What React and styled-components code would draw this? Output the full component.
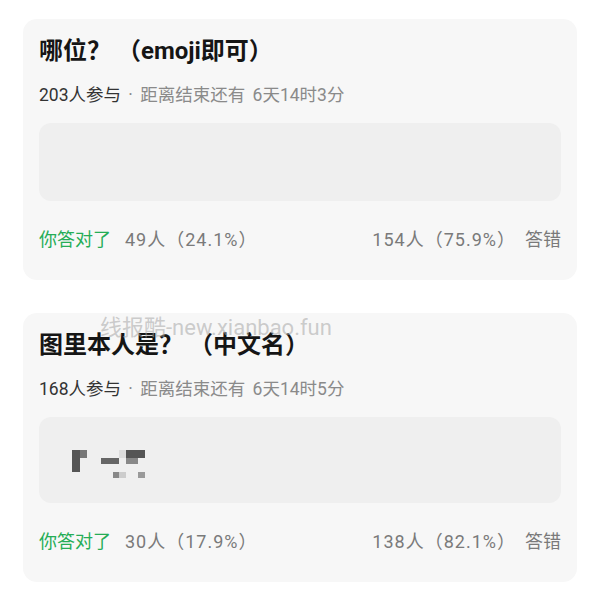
import React from "react";
import styled, { createGlobalStyle } from "styled-components";

const GlobalStyle = createGlobalStyle`
  html, body {
    margin: 0;
    padding: 0;
    background: #ffffff;
  }
  body {
    font-family: Roboto, "Noto Sans CJK SC", sans-serif;
    -webkit-font-smoothing: antialiased;
  }
`;

const Page = styled.div`
  display: flex;
  flex-direction: column;
  gap: 33px;
  padding: 19px 23px;
  width: 554px;
`;

const Card = styled.section`
  position: relative;
  background: #f7f7f7;
  border-radius: 14px;
  padding: 16px 16px 27px;
`;

const Title = styled.h2`
  margin: 0;
  font-size: 24px;
  line-height: 32px;
  font-weight: 700;
  color: #151515;
  white-space: pre;
`;

const Meta = styled.div`
  margin-top: 16px;
  font-size: 17.5px;
  line-height: 24px;
  color: #8a8a8a;
  word-spacing: 3px;
  white-space: pre;
`;

const Count = styled.span`
  color: #333333;
`;

const AnswerBox = styled.div`
  margin-top: 16px;
  height: ${(p) => p.$h}px;
  box-sizing: border-box;
  background: #efefef;
  border-radius: 12px;
  padding: 33px 0 0 33px;
  display: flex;
  align-items: flex-start;
`;

const ResultRow = styled.div`
  margin-top: 26px;
  display: flex;
  justify-content: space-between;
  align-items: center;
  font-size: 18px;
  line-height: 26px;
  color: #7a7a7a;
  white-space: nowrap;
`;

const Side = styled.div`
  display: flex;
  align-items: center;
  gap: ${(p) => p.$gap}px;
`;

const Correct = styled.span`
  color: #25ad56;
`;

const Figure = styled.span`
  letter-spacing: 1px;
`;

const Watermark = styled.div`
  position: absolute;
  left: 77px;
  top: 3px;
  font-size: 22px;
  line-height: 24px;
  color: rgba(165, 165, 165, 0.55);
  pointer-events: none;
  white-space: nowrap;
`;

const PixelBlob = () => (
  <svg width="76" height="28" viewBox="0 0 76 28" aria-hidden="true">
    <rect x="0" y="0" width="8" height="22" fill="#555" />
    <rect x="8" y="0" width="7" height="8" fill="#777" />
    <rect x="29" y="8" width="18" height="6" fill="#666" />
    <rect x="47" y="0" width="7" height="8" fill="#ddd" />
    <rect x="54" y="0" width="19" height="8" fill="#555" />
    <rect x="54" y="8" width="12" height="6" fill="#888" />
    <rect x="41" y="22" width="6" height="6" fill="#888" />
    <rect x="47" y="22" width="7" height="6" fill="#ccc" />
    <rect x="66" y="22" width="7" height="6" fill="#999" />
  </svg>
);

const polls = [
  {
    title: "哪位？ （emoji即可）",
    count: "203人参与",
    remain: " · 距离结束还有 6天14时3分",
    boxH: 78,
    right: "49人（24.1%）",
    wrong: "154人（75.9%）",
    blob: false,
    watermark: false,
  },
  {
    title: "图里本人是？ （中文名）",
    count: "168人参与",
    remain: " · 距离结束还有 6天14时5分",
    boxH: 86,
    right: "30人（17.9%）",
    wrong: "138人（82.1%）",
    blob: true,
    watermark: true,
  },
];

export default function App() {
  return (
    <>
      <GlobalStyle />
      <Page>
        {polls.map((p) => (
          <Card key={p.title}>
            <Title>{p.title}</Title>
            <Meta>
              <Count>{p.count}</Count>
              {p.remain}
            </Meta>
            <AnswerBox $h={p.boxH}>{p.blob && <PixelBlob />}</AnswerBox>
            <ResultRow>
              <Side $gap={14}>
                <Correct>你答对了</Correct>
                <Figure>{p.right}</Figure>
              </Side>
              <Side $gap={9}>
                <Figure>{p.wrong}</Figure>
                <span>答错</span>
              </Side>
            </ResultRow>
            {p.watermark && <Watermark>线报酷-new.xianbao.fun</Watermark>}
          </Card>
        ))}
      </Page>
    </>
  );
}
